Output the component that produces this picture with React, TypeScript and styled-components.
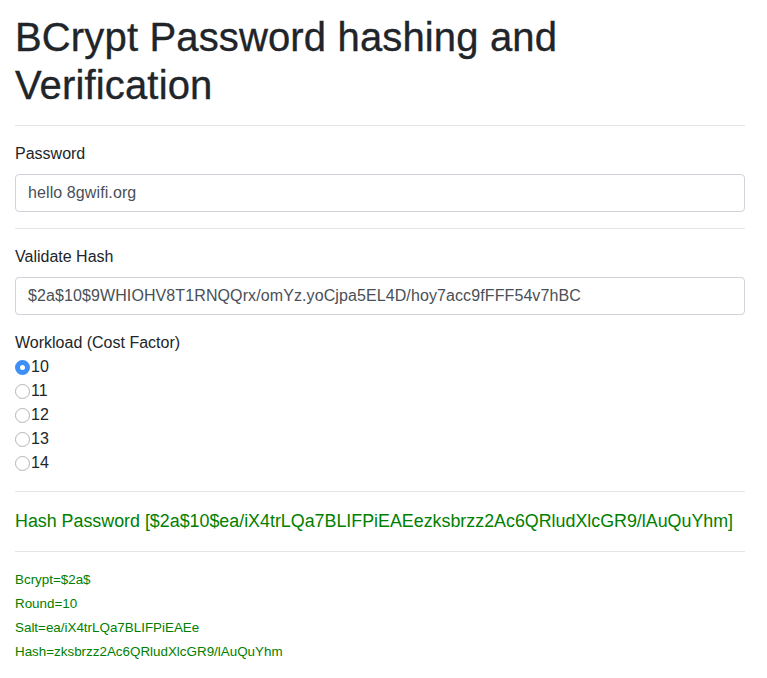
import React from "react";
import styled, { createGlobalStyle } from "styled-components";

const GlobalStyle = createGlobalStyle`
  html, body {
    margin: 0;
    padding: 0;
    background: #fff;
  }
  body {
    font-family: "Liberation Sans", Arial, Helvetica, sans-serif;
    font-size: 16px;
    line-height: 1.5;
    color: #212529;
  }
  * { box-sizing: border-box; }
`;

const Container = styled.div`
  padding: 13px 22px 20px 15px;
`;

const Title = styled.h1`
  margin: 0 0 8px;
  padding-top: 1px;
  font-size: 40px;
  font-weight: 500;
  line-height: 47.5px;
  letter-spacing: 0.15px;
  -webkit-text-stroke: 0.35px #212529;
  max-width: 570px;
`;

const Rule = styled.hr`
  margin: 16px 0;
  border: 0;
  border-top: 1px solid rgba(0, 0, 0, 0.1);
`;

const FormGroup = styled.div`
  margin-bottom: 16px;
`;

const Label = styled.label<{ $flush?: boolean }>`
  display: block;
  margin-bottom: ${(p) => (p.$flush ? "0" : "8px")};
  font-size: 16px;
  line-height: 24px;
`;

const TextInput = styled.input`
  display: block;
  width: 100%;
  height: 38px;
  padding: 6px 12px;
  font-family: inherit;
  font-size: 16px;
  line-height: 24px;
  letter-spacing: 0.1px;
  color: #495057;
  background: #fff;
  border: 1px solid #ced4da;
  border-radius: 4px;
  outline: none;
`;

const RadioList = styled.div`
  display: flex;
  flex-direction: column;
`;

const RadioRow = styled.label`
  display: flex;
  align-items: center;
  height: 24px;
  font-size: 16px;
  line-height: 24px;
`;

const Radio = styled.input`
  appearance: none;
  -webkit-appearance: none;
  width: 15px;
  height: 15px;
  margin: 1px 1px 0 0;
  border-radius: 50%;
  border: 1px solid #b4b4b4;
  background: #fff;
  flex: none;

  &:checked {
    border: 5px solid #3b8ff6;
    background: #fff;
  }
`;

const Result = styled.div`
  color: #008000;
  font-size: 17.85px;
  line-height: 27px;
`;

const Details = styled.div`
  color: #008000;
  font-size: 13.4px;
  line-height: 24px;
`;

const costs = [10, 11, 12, 13, 14];

export default function App() {
  return (
    <>
      <GlobalStyle />
      <Container>
        <Title>BCrypt Password hashing and Verification</Title>
        <Rule />
        <FormGroup>
          <Label>Password</Label>
          <TextInput defaultValue="hello 8gwifi.org" />
        </FormGroup>
        <Rule />
        <FormGroup>
          <Label>Validate Hash</Label>
          <TextInput defaultValue="$2a$10$9WHIOHV8T1RNQQrx/omYz.yoCjpa5EL4D/hoy7acc9fFFF54v7hBC" />
        </FormGroup>
        <div>
          <Label as="div" $flush>Workload (Cost Factor)</Label>
          <RadioList>
            {costs.map((c) => (
              <RadioRow key={c}>
                <Radio type="radio" name="cost" defaultChecked={c === 10} />
                {c}
              </RadioRow>
            ))}
          </RadioList>
        </div>
        <Rule />
        <Result>Hash Password [$2a$10$ea/iX4trLQa7BLIFPiEAEezksbrzz2Ac6QRludXlcGR9/lAuQuYhm]</Result>
        <Rule />
        <Details>
          <div>Bcrypt=$2a$</div>
          <div>Round=10</div>
          <div>Salt=ea/iX4trLQa7BLIFPiEAEe</div>
          <div>Hash=zksbrzz2Ac6QRludXlcGR9/lAuQuYhm</div>
        </Details>
      </Container>
    </>
  );
}
